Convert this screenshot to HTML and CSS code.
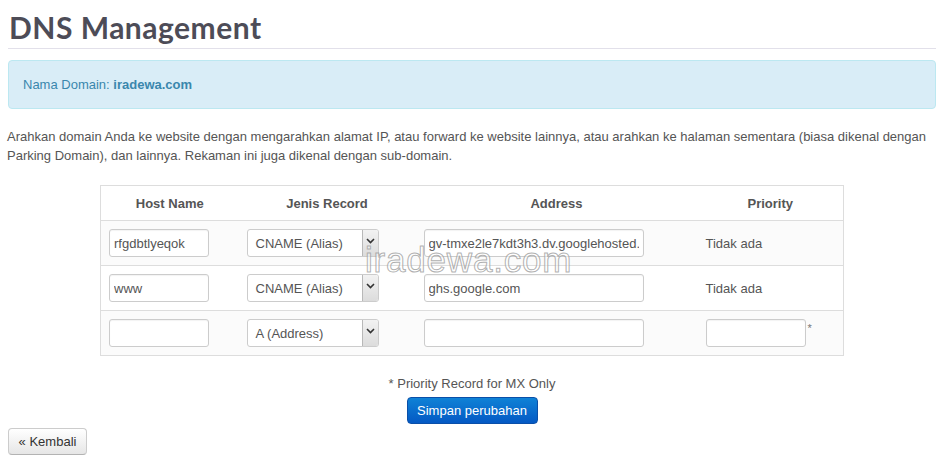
FILE: index.html
```html
<!DOCTYPE html>
<html>
<head>
<meta charset="utf-8">
<title>DNS Management</title>
<link rel="stylesheet" href="styles.css">
</head>
<body>
<div class="page">
  <h1 class="title">DNS Management</h1>
  <div class="alert">Nama Domain:&nbsp;<strong>iradewa.com</strong></div>
  <p class="intro">Arahkan domain Anda ke website dengan mengarahkan alamat IP, atau forward ke website lainnya, atau arahkan ke halaman sementara (biasa dikenal dengan Parking Domain), dan lainnya. Rekaman ini juga dikenal dengan sub-domain.</p>

  <div class="table-wrap">
    <table class="dns">
      <colgroup>
        <col class="c1"><col class="c2"><col class="c3"><col class="c4">
      </colgroup>
      <thead>
        <tr><th>Host Name</th><th>Jenis Record</th><th>Address</th><th>Priority</th></tr>
      </thead>
      <tbody>
        <tr class="odd">
          <td><input class="field host" type="text" value="rfgdbtlyeqok"></td>
          <td><div class="select"><span class="sel-text">CNAME (Alias)</span><span class="sel-arrow"><svg width="9" height="6" viewBox="0 0 9 6"><path d="M1 1 L4.5 4.5 L8 1" fill="none" stroke="#333" stroke-width="1.6"/></svg></span></div></td>
          <td><input class="field addr" type="text" value="gv-tmxe2le7kdt3h3.dv.googlehosted.com"></td>
          <td class="plain">Tidak ada</td>
        </tr>
        <tr>
          <td><input class="field host" type="text" value="www"></td>
          <td><div class="select"><span class="sel-text">CNAME (Alias)</span><span class="sel-arrow"><svg width="9" height="6" viewBox="0 0 9 6"><path d="M1 1 L4.5 4.5 L8 1" fill="none" stroke="#333" stroke-width="1.6"/></svg></span></div></td>
          <td><input class="field addr" type="text" value="ghs.google.com"></td>
          <td class="plain">Tidak ada</td>
        </tr>
        <tr class="odd">
          <td><input class="field host" type="text" value=""></td>
          <td><div class="select"><span class="sel-text">A (Address)</span><span class="sel-arrow"><svg width="9" height="6" viewBox="0 0 9 6"><path d="M1 1 L4.5 4.5 L8 1" fill="none" stroke="#333" stroke-width="1.6"/></svg></span></div></td>
          <td><input class="field addr" type="text" value=""></td>
          <td><span class="prio"><input class="field host" type="text" value=""><span class="star">*</span></span></td>
        </tr>
      </tbody>
    </table>
    <div class="watermark">iradewa.com</div>
  </div>

  <p class="note">* Priority Record for MX Only</p>
  <div class="actions"><button class="btn-primary" type="button">Simpan perubahan</button></div>
  <button class="btn-back" type="button">« Kembali</button>
</div>
</body>
</html>
```

FILE: styles.css
```css
html, body {
  margin: 0;
  padding: 0;
  background: #ffffff;
}
body {
  padding: 8px;
  font-family: "Liberation Sans", Arial, sans-serif;
  font-size: 13px;
  color: #555555;
}
.page {
  width: 928px;
}
.title {
  margin: 0;
  font-family: Lato, "Open Sans", sans-serif;
  font-weight: 700;
  font-size: 30px;
  line-height: 38px;
  color: #4d4c57;
  padding-left: 1px;
  padding-bottom: 2px;
  border-bottom: 1px solid #e2e0ea;
  letter-spacing: 0.5px;
}
.alert {
  margin-top: 11px;
  height: 47px;
  display: flex;
  align-items: center;
  padding: 0 14px;
  background: #d9edf7;
  border: 1px solid #bce8f1;
  border-radius: 4px;
  color: #3a87ad;
  font-size: 13px;
}
.alert strong {
  font-weight: 700;
}
.intro {
  margin: 18px 0 0 -1px;
  line-height: 19px;
  color: #555555;
}
.table-wrap {
  position: relative;
  margin-top: 20px;
  display: flex;
  justify-content: center;
}
.dns {
  width: 743px;
  border-collapse: collapse;
  table-layout: fixed;
  border: 1px solid #dddddd;
}
.c1 { width: 138px; }
.c2 { width: 177px; }
.c3 { width: 282px; }
.c4 { width: 146px; }
.dns th {
  height: 34px;
  padding: 0;
  text-align: center;
  font-weight: 700;
  color: #555555;
  font-size: 13px;
}
.dns td {
  height: 44px;
  padding: 0 0 0 8px;
  border-top: 1px solid #dddddd;
  vertical-align: middle;
}
.dns tr.odd td {
  background: #fbfbfb;
}
.dns td.plain {
  padding-left: 8px;
  color: #555555;
}
.field {
  box-sizing: border-box;
  height: 28px;
  border: 1px solid #cccccc;
  border-radius: 3px;
  padding: 0 4px;
  font-family: "Liberation Sans", Arial, sans-serif;
  font-size: 13px;
  color: #555555;
  background: #ffffff;
  box-shadow: inset 0 1px 1px rgba(0,0,0,0.05);
  display: block;
}
.host { width: 100px; }
.addr { width: 220px; }
.select {
  box-sizing: border-box;
  width: 132px;
  height: 28px;
  border: 1px solid #cccccc;
  border-radius: 3px;
  display: flex;
  align-items: stretch;
  background: #ffffff;
}
.sel-text {
  flex: 1;
  display: flex;
  align-items: center;
  padding-left: 8px;
  color: #555555;
}
.sel-arrow {
  width: 15px;
  border-left: 1px solid #b8b8b8;
  background: linear-gradient(#f2f2f2, #dcdcdc);
  display: flex;
  justify-content: center;
  align-items: flex-start;
  padding-top: 8px;
  border-radius: 0 2px 2px 0;
}
.prio {
  display: flex;
  align-items: flex-start;
}
.star {
  margin-left: 2px;
  margin-top: 3px;
  color: #777777;
  font-size: 11px;
}
.watermark {
  position: absolute;
  left: 357px;
  top: 55px;
  font-family: "Liberation Sans", Arial, sans-serif;
  font-size: 35px;
  letter-spacing: 0.8px;
  color: rgba(255,255,255,0.55);
  -webkit-text-stroke: 1px rgba(150,150,150,0.75);
  pointer-events: none;
}
.note {
  margin: 20px 0 0;
  text-align: center;
  line-height: 16px;
  color: #555555;
}
.actions {
  display: flex;
  justify-content: center;
  margin-top: 5px;
}
.btn-primary {
  width: 131px;
  height: 27px;
  border: 1px solid #0a4fa8;
  border-radius: 4px;
  background: linear-gradient(#0f82d6, #0459c4);
  color: #ffffff;
  font-family: "Liberation Sans", Arial, sans-serif;
  font-size: 13px;
  padding: 0;
}
.btn-back {
  display: block;
  margin-top: 4px;
  width: 79px;
  height: 27px;
  border: 1px solid #cccccc;
  border-bottom-color: #b3b3b3;
  border-radius: 4px;
  background: linear-gradient(#ffffff, #e6e6e6);
  color: #333333;
  font-family: "Liberation Sans", Arial, sans-serif;
  font-size: 13px;
  padding: 0;
}
```
